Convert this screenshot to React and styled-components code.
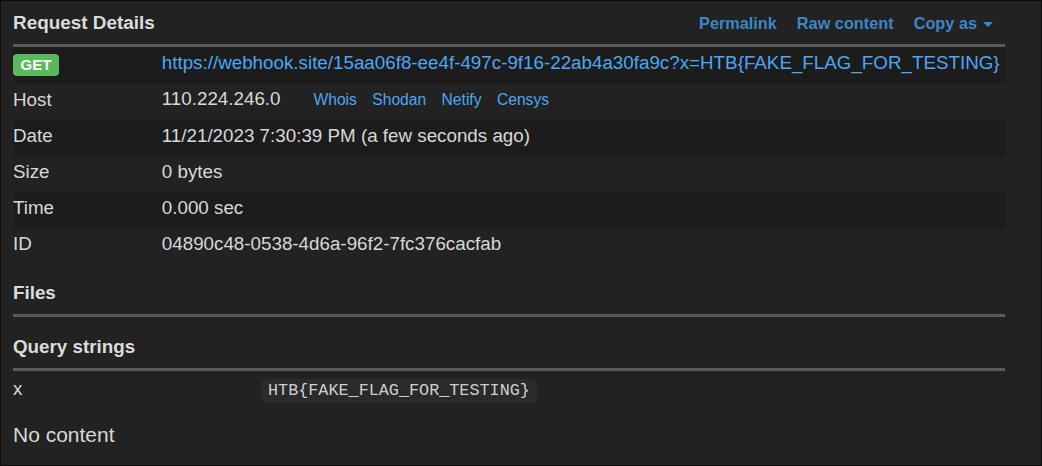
import React from "react";
import styled, { createGlobalStyle } from "styled-components";

const GlobalStyle = createGlobalStyle`
  html, body { margin: 0; padding: 0; background: #222222; }
  body { font-family: "Liberation Sans", Arial, Helvetica, sans-serif; color: #d8d8d8; }
  * { box-sizing: border-box; }
`;

const Frame = styled.div`
  width: 1042px;
  height: 466px;
  border: 1px solid #0b0b0b;
  background: #222222;
  padding: 0 36px 0 12px;
  overflow: hidden;
`;

const Header = styled.div`
  display: flex;
  align-items: center;
  justify-content: space-between;
  height: 46px;
  border-bottom: 3px solid #5a5a5a;
  padding-right: 12px;
`;

const Title = styled.h3`
  margin: 0;
  font-size: 18.9px;
  line-height: 20px;
  font-weight: 700;
  color: #dcdcdc;
`;

const HeaderLinks = styled.div`
  display: flex;
  align-items: center;
  padding-top: 1px;
`;

const HeaderLink = styled.a`
  font-size: 16.3px;
  font-weight: 700;
  line-height: 20px;
  color: #3d86c6;
  text-decoration: none;
  margin-left: ${(p) => p.$gap || 0}px;
  display: inline-flex;
  align-items: center;
`;

const Caret = styled.span`
  display: inline-block;
  width: 0;
  height: 0;
  margin-left: 6px;
  margin-top: 2px;
  border-top: 5px solid #3d86c6;
  border-left: 5.5px solid transparent;
  border-right: 5.5px solid transparent;
`;

const Table = styled.table`
  width: 100%;
  border-collapse: collapse;
  table-layout: fixed;
`;

const Row = styled.tr`
  background: ${(p) => (p.$striped ? "#1c1c1c" : "transparent")};
`;

const Cell = styled.td`
  padding: ${(p) => p.$pad || "6px 0 10px"};
  height: 36px;
  font-size: 18.8px;
  line-height: 20px;
  vertical-align: ${(p) => p.$valign || "middle"};
  color: #d8d8d8;
  white-space: nowrap;
`;

const Label = styled(Cell)`
  width: ${(p) => p.$width || "15%"};
`;

const Badge = styled.span`
  display: block;
  width: 46px;
  height: 22px;
  line-height: 22px;
  text-align: center;
  background: #5cb85c;
  color: #ffffff;
  font-weight: 700;
  font-size: 15px;
  border-radius: 4px;
`;

const UrlLink = styled.a`
  color: #4ea6f4;
  text-decoration: none;
`;

const SmallLinks = styled.span`
  margin-left: 17.5px;
`;

const SmallLink = styled.a`
  font-size: 15.6px;
  color: #4ea6f4;
  text-decoration: none;
  margin-left: 15.5px;
`;

const SectionTitle = styled.h3`
  margin: ${(p) => p.$top || 20}px 0 0;
  padding-bottom: 11px;
  font-size: 18.8px;
  line-height: 20px;
  font-weight: 700;
  color: #dcdcdc;
  border-bottom: 3px solid #5a5a5a;
`;

const Code = styled.code`
  display: inline-block;
  font-family: "Liberation Mono", "Courier New", monospace;
  font-size: 16.8px;
  line-height: 20px;
  padding: 2px 7px;
  background: #2a2a2a;
  color: #cfcfcf;
  border-radius: 5px;
`;

const Empty = styled.p`
  margin: 12px 0 0;
  font-size: 21px;
  line-height: 24px;
  color: #d8d8d8;
`;

const details = [
  ["Host", "110.224.246.0", true],
  ["Date", "11/21/2023 7:30:39 PM (a few seconds ago)"],
  ["Size", "0 bytes"],
  ["Time", "0.000 sec"],
  ["ID", "04890c48-0538-4d6a-96f2-7fc376cacfab"],
];

export default function App() {
  return (
    <>
      <GlobalStyle />
      <Frame>
        <Header>
          <Title>Request Details</Title>
          <HeaderLinks>
            <HeaderLink href="#">Permalink</HeaderLink>
            <HeaderLink href="#" $gap={20}>Raw content</HeaderLink>
            <HeaderLink href="#" $gap={20}>
              Copy as<Caret />
            </HeaderLink>
          </HeaderLinks>
        </Header>
        <Table>
          <tbody>
            <Row $striped>
              <Label $pad="0">
                <Badge>GET</Badge>
              </Label>
              <Cell>
                <UrlLink href="#">
                  https://webhook.site/15aa06f8-ee4f-497c-9f16-22ab4a30fa9c?x=HTB{"{"}FAKE_FLAG_FOR_TESTING{"}"}
                </UrlLink>
              </Cell>
            </Row>
            {details.map(([k, v, links], i) => (
              <Row key={k} $striped={i % 2 === 1}>
                <Label>{k}</Label>
                <Cell>
                  {v}
                  {links && (
                    <SmallLinks>
                      <SmallLink href="#">Whois</SmallLink>
                      <SmallLink href="#">Shodan</SmallLink>
                      <SmallLink href="#">Netify</SmallLink>
                      <SmallLink href="#">Censys</SmallLink>
                    </SmallLinks>
                  )}
                </Cell>
              </Row>
            ))}
          </tbody>
        </Table>
        <SectionTitle $top={19}>Files</SectionTitle>
        <SectionTitle $top={20}>Query strings</SectionTitle>
        <Table>
          <tbody>
            <Row>
              <Label $width="25%" $valign="top" $pad="8px 0">x</Label>
              <Cell $valign="top" $pad="8px 0">
                <Code>HTB{"{"}FAKE_FLAG_FOR_TESTING{"}"}</Code>
              </Cell>
            </Row>
          </tbody>
        </Table>
        <Empty>No content</Empty>
      </Frame>
    </>
  );
}
